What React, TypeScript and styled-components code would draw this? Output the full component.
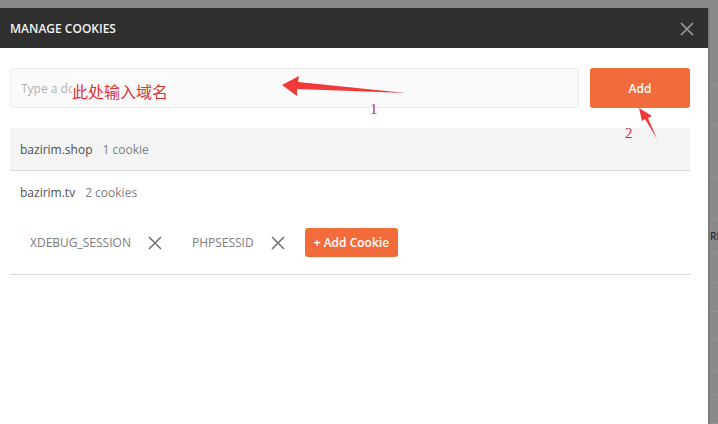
import React from "react";
import styled, { createGlobalStyle } from "styled-components";

const GlobalStyle = createGlobalStyle`
  html, body {
    margin: 0;
    padding: 0;
    background: #8a8a8a;
    font-family: "Open Sans", "Noto Sans", Arial, sans-serif;
  }
  * { box-sizing: border-box; }
`;

interface Domain {
  name: string;
  count: string;
  cookies?: string[];
}

const domains: Domain[] = [
  { name: "bazirim.shop", count: "1 cookie" },
  { name: "bazirim.tv", count: "2 cookies", cookies: ["XDEBUG_SESSION", "PHPSESSID"] },
];

const CloseIcon: React.FC<{ size: number; color: string; stroke?: number }> = ({
  size,
  color,
  stroke = 1.6,
}) => (
  <svg width={size} height={size} viewBox="0 0 14 14">
    <path d="M1 1 L13 13 M13 1 L1 13" stroke={color} strokeWidth={stroke} fill="none" />
  </svg>
);

const App: React.FC = () => {
  return (
    <>
      <GlobalStyle />
      <Page>
        <Modal>
          <Header>
            <Title>MANAGE COOKIES</Title>
            <CloseButton>
              <CloseIcon size={14} color="#9c9c9c" stroke={1.7} />
            </CloseButton>
          </Header>
          <Body>
            <AddRow>
              <DomainInput placeholder="Type a domain name" />
              <AddButton>Add</AddButton>
            </AddRow>
            <DomainList>
              {domains.map((d, i) => (
                <DomainItem key={d.name} $active={i === 0}>
                  <DomainHead>
                    <DomainName>{d.name}</DomainName>
                    <DomainCount>{d.count}</DomainCount>
                  </DomainHead>
                  {d.cookies && (
                    <CookieRow>
                      {d.cookies.map((c) => (
                        <Chip key={c}>
                          <span>{c}</span>
                          <CloseIcon size={14} color="#727272" />
                        </Chip>
                      ))}
                      <AddCookie>+ Add Cookie</AddCookie>
                    </CookieRow>
                  )}
                </DomainItem>
              ))}
            </DomainList>
          </Body>

          {/* annotations drawn over the screenshot */}
          <Note $x={72} $y={69}>此处输入域名</Note>
          <Num $x={370} $y={93}>1</Num>
          <Num $x={625} $y={117}>2</Num>
          <Arrows width="710" height="200" viewBox="0 0 710 200">
            <polygon points="282,77 299,68 298,74 406,85 297,81 297,88" fill="#f03a3a" />
            <polygon points="639,100 652,108 648,110 657,131 645,111 642,113" fill="#f03a3a" />
          </Arrows>
        </Modal>
        <Backdrop>
          {[77, 40, 53, 42, 33, 30, 29, 28, 32, 23, 29].map((h, i) => (
            <BackRow key={i} style={{ height: h }}>
              {i === 4 && <BackText>RI</BackText>}
            </BackRow>
          ))}
        </Backdrop>
      </Page>
    </>
  );
};

export default App;

const Page = styled.div`
  display: grid;
  grid-template-columns: 710px 1fr;
  height: 424px;
  overflow: hidden;
`;

const Modal = styled.div`
  position: relative;
  margin-top: 8px;
  background: #fff;
  display: flex;
  flex-direction: column;
  border-right: 2px solid #7a7a7a;
`;

const Header = styled.div`
  height: 40px;
  background: #2f2f2f;
  display: flex;
  align-items: center;
  justify-content: space-between;
  padding: 0 14px 0 10px;
`;

const Title = styled.div`
  color: #f2f2f2;
  font-size: 12px;
  font-weight: 600;
`;

const CloseButton = styled.div`
  display: flex;
  align-items: center;
  padding-top: 1px;
`;

const Body = styled.div`
  padding: 20px 18px 0 10px;
  display: flex;
  flex-direction: column;
  gap: 20px;
`;

const AddRow = styled.div`
  display: flex;
  gap: 11px;
`;

const DomainInput = styled.input`
  flex: 1;
  height: 40px;
  border: 1px solid #ededed;
  border-radius: 3px;
  background: #fafafa;
  padding: 0 10px;
  font-family: "Open Sans", sans-serif;
  font-size: 12px;
  outline: none;

  &::placeholder {
    color: #b0b0b0;
  }
`;

const AddButton = styled.button`
  width: 100px;
  height: 40px;
  border: none;
  border-radius: 3px;
  background: #f26b3a;
  color: #fff;
  font-family: "Open Sans", sans-serif;
  font-size: 12px;
  font-weight: 600;
`;

const DomainList = styled.div`
  display: flex;
  flex-direction: column;
`;

const DomainItem = styled.div<{ $active?: boolean }>`
  background: ${(p) => (p.$active ? "#f4f4f4" : "#fff")};
  border-bottom: 1px solid #d8d8d8;
`;

const DomainHead = styled.div`
  height: 42px;
  display: flex;
  align-items: center;
  gap: 10px;
  padding: 0 10px;
  font-size: 12px;
`;

const DomainName = styled.span`
  color: #505050;
`;

const DomainCount = styled.span`
  color: #808080;
`;

const CookieRow = styled.div`
  display: flex;
  align-items: center;
  gap: 30px;
  padding: 15px 20px 17px;
`;

const Chip = styled.div`
  display: flex;
  align-items: center;
  gap: 17px;
  font-size: 12px;
  color: #7c7c7c;
`;

const AddCookie = styled.button`
  margin-left: -10px;
  height: 29px;
  padding: 0 9px;
  border: none;
  border-radius: 3px;
  background: #f26b3a;
  color: #fff;
  font-family: "Open Sans", sans-serif;
  font-size: 12px;
  font-weight: 600;
`;

const Note = styled.div<{ $x: number; $y: number }>`
  position: absolute;
  left: ${(p) => p.$x}px;
  top: ${(p) => p.$y}px;
  color: #e03434;
  font-family: "Noto Sans CJK SC", sans-serif;
  font-size: 16px;
  line-height: 20px;
  padding-top: 4px;
  background: rgba(250, 250, 250, 0.85);
`;

const Num = styled.div<{ $x: number; $y: number }>`
  position: absolute;
  left: ${(p) => p.$x}px;
  top: ${(p) => p.$y}px;
  color: #c0303a;
  font-family: "Liberation Serif", serif;
  font-size: 15px;
`;

const Arrows = styled.svg`
  position: absolute;
  left: 0;
  top: 0;
  pointer-events: none;
`;

const Backdrop = styled.div`
  padding-top: 8px;
  display: flex;
  flex-direction: column;
`;

const BackRow = styled.div`
  border-bottom: 1px solid #959595;
  display: flex;
  align-items: center;
`;

const BackText = styled.span`
  font-size: 10px;
  color: #333;
  font-weight: 600;
`;
